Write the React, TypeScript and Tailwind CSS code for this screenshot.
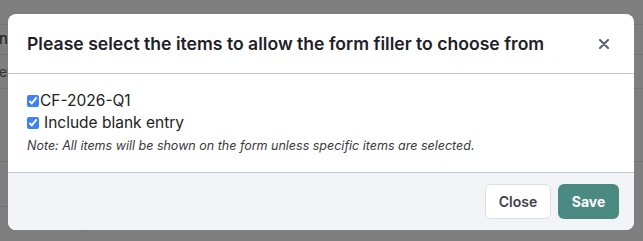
import React, { useState } from 'react';

const font = { fontFamily: 'Inter, "Noto Sans", sans-serif' };

const BackgroundPage: React.FC = () => (
  <div className="min-h-[241px] bg-white" style={font}>
    <div className="h-[24px]" />
    <div className="border-t border-[#e5e7eb] h-[30px] flex items-center text-[15px] text-[#333]">
      <span className="-ml-[1px] w-[8px] overflow-hidden">n</span>
    </div>
    <div className="border-t border-[#e5e7eb] h-[34px] flex items-center text-[14px] text-[#666]">
      <span className="-ml-[1px]">ex</span>
    </div>
    <div className="border-t border-[#e5e7eb] h-[73px]" />
    <div className="border-t border-[#e5e7eb] h-[45px]" />
    <div className="border-t border-[#e5e7eb] w-[86px] h-[30px] border-r rounded-br-[6px]" />
  </div>
);

const App: React.FC = () => {
  const [items, setItems] = useState({ cf: true, blank: true });

  return (
    <div className="relative w-[643px] h-[241px] overflow-hidden">
      <BackgroundPage />
      <div className="absolute inset-0 bg-black/50" />
      <div className="absolute left-[8px] top-[14px] w-[626px] h-[216px] bg-white rounded-[8px] overflow-hidden flex flex-col" style={font}>
        <div className="h-[60px] flex items-center justify-between px-[19px] border-b border-[#c3c8d4]">
          <h2 className="text-[17.6px] font-semibold text-[#1f2129] pt-[2px]">
            Please select the items to allow the form filler to choose from
          </h2>
          <button className="w-[24px] h-[24px] flex items-center justify-center mr-[-1px] text-[#5b606c]">
            <svg width="10" height="10" viewBox="0 0 10 10" fill="none" stroke="currentColor" strokeWidth="2" strokeLinecap="round">
              <path d="M1 1 L9 9 M9 1 L1 9" />
            </svg>
          </button>
        </div>

        <div className="px-[19px] pt-[16px] pb-[12px] flex-1 text-[#222]">
          <label className="flex items-center h-[22px] text-[15.5px]">
            <input
              type="checkbox"
              checked={items.cf}
              onChange={() => setItems({ ...items, cf: !items.cf })}
              className="w-[12px] h-[12px] m-0 mr-[1px] accent-[#3b82f6]"
            />
            CF-2026-Q1
          </label>
          <label className="flex items-center h-[22px] text-[15.5px]">
            <input
              type="checkbox"
              checked={items.blank}
              onChange={() => setItems({ ...items, blank: !items.blank })}
              className="w-[12px] h-[12px] m-0 mr-[5px] accent-[#3b82f6]"
            />
            Include blank entry
          </label>
          <p className="italic text-[12.5px] text-[#3a3a3a] mt-[3px]">
            Note: All items will be shown on the form unless specific items are selected.
          </p>
        </div>

        <div className="h-[58px] bg-[#f3f4f8] border-t border-[#c3c8d4] flex items-center justify-end gap-[7px] px-[15px]">
          <button className="h-[35px] w-[66px] rounded-[6px] border border-[#dadde4] bg-white text-[14px] font-semibold text-[#3c404c]">
            Close
          </button>
          <button className="h-[35px] w-[61px] rounded-[6px] bg-[#4b8a80] text-[14px] font-bold text-white">
            Save
          </button>
        </div>
      </div>
    </div>
  );
};

export default App;
